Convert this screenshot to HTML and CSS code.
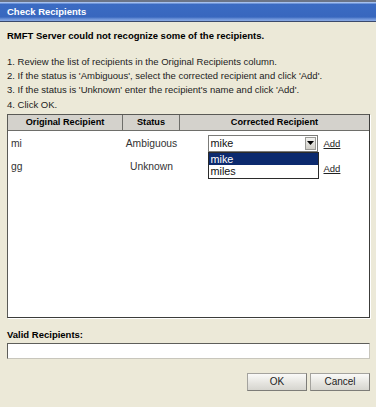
FILE: index.html
```html
<!DOCTYPE html>
<html lang="en">
  <head>
    <meta charset="UTF-8" />
    <title>Check Recipients</title>
    <link rel="stylesheet" href="styles.css">
  </head>
  <body>
    <div class="titlebar"><span>Check Recipients</span></div>
    <div class="content">
      <p class="lead">RMFT Server could not recognize some of the recipients.</p>
      <div class="steps">
        <div>1. Review the list of recipients in the Original Recipients column.</div>
        <div>2. If the status is 'Ambiguous', select the corrected recipient and click 'Add'.</div>
        <div>3. If the status is 'Unknown' enter the recipient's name and click 'Add'.</div>
        <div>4. Click OK.</div>
      </div>

      <div class="grid">
        <div class="grid-head">
          <div class="cell">Original Recipient</div>
          <div class="cell">Status</div>
          <div class="cell">Corrected Recipient</div>
        </div>
        <div class="grid-body">
          <div class="row">
            <div class="orig">mi</div>
            <div class="status">Ambiguous</div>
            <div class="fix">
              <div class="select">
                <span>mike</span>
                <span class="arrow"><svg width="7" height="4" viewBox="0 0 7 4"><path d="M0 0h7L3.5 4z" fill="#000"/></svg></span>
                <ul class="dropdown">
                  <li class="active">mike</li>
                  <li>miles</li>
                </ul>
              </div>
              <a class="add" href="#">Add</a>
            </div>
          </div>
          <div class="row">
            <div class="orig">gg</div>
            <div class="status">Unknown</div>
            <div class="fix">
              <div class="textbox"></div>
              <a class="add" href="#">Add</a>
            </div>
          </div>
        </div>
      </div>

      <div class="valid-label">Valid Recipients:</div>
      <div class="valid-input"></div>

      <div class="actions">
        <button>OK</button>
        <button>Cancel</button>
      </div>
    </div>
  </body>
</html>
```

FILE: styles.css
```css
* {
  margin: 0;
  padding: 0;
  box-sizing: border-box;
}
body {
  font-family: "Liberation Sans", Arial, sans-serif;
  font-size: 9.5px;
  background-color: #ece9d8;
  color: #000;
  width: 376px;
  height: 407px;
  overflow: hidden;
}
.titlebar {
  height: 22px;
  border-top: 2px solid #6b7487;
  border-bottom: 1px solid #3b4a6c;
  background: linear-gradient(#a4c0f0 0, #a4c0f0 1px, #3b6bc3 2px, #3867be 15px, #6b92d8 17px, #8aaae4 19px);
  color: #fff;
  font-weight: bold;
  padding-left: 7px;
  line-height: 19px;
}
.content {
  padding: 0 6px 0 7px;
}
.lead {
  font-weight: bold;
  line-height: 12px;
  margin-top: 8px;
}
.steps {
  margin-top: 13px;
  line-height: 14.2px;
  color: #222;
}
.grid {
  margin-top: 2px;
  height: 204px;
  border: 1px solid #5a5a56;
  border-right-color: #3c3c3a;
  border-bottom-color: #3c3c3a;
  box-shadow: 1px 1px 0 #fff;
  background: #fff;
  display: flex;
  flex-direction: column;
}
.grid-head,
.row {
  display: grid;
  grid-template-columns: 115px 57px 1fr;
}
.grid-head {
  height: 16px;
  background: #d4d2cc;
  border-bottom: 1px solid #6e6e6a;
  font-weight: bold;
  font-size: 9.2px;
}
.grid-head .cell {
  text-align: center;
  line-height: 15px;
  border-right: 1px solid #6e6e6a;
}
.grid-head .cell:last-child {
  border-right: none;
}
.grid-body {
  padding-top: 1px;
  font-size: 10.3px;
  color: #333;
}
.row {
  height: 23px;
  align-items: center;
}
.orig {
  padding-left: 3px;
}
.status {
  text-align: center;
}
.fix {
  display: flex;
  align-items: center;
  justify-content: center;
  gap: 6px;
}
.select,
.textbox {
  position: relative;
  width: 110px;
  height: 17px;
  border: 1px solid #7b7b78;
  background: #fff;
}
.textbox {
  margin-top: 4px;
}
.select {
  display: flex;
  align-items: center;
  padding-left: 2px;
  font-size: 10.8px;
  color: #111;
}
.arrow {
  position: absolute;
  right: 1px;
  top: 1px;
  width: 11px;
  height: 13px;
  background: linear-gradient(#f2f2f0, #cfcdc6);
  border: 1px solid #9a9a96;
  display: flex;
  align-items: center;
  justify-content: center;
}
.dropdown {
  position: absolute;
  left: -1px;
  top: 16px;
  width: 111px;
  list-style: none;
  border: 1px solid #2b2b2b;
  background: #fff;
  z-index: 5;
}
.dropdown li {
  height: 12.5px;
  line-height: 12.5px;
  padding-left: 2px;
}
.dropdown li.active {
  background: #0c2a6e;
  color: #fff;
}
.add {
  color: #222;
  font-size: 9.5px;
  text-decoration: underline;
  width: 18px;
}
.row:last-child .add {
  margin-top: 4px;
}
.valid-label {
  margin-top: 11px;
  font-weight: bold;
  line-height: 12px;
}
.valid-input {
  margin-top: 2px;
  height: 16px;
  background: #fff;
  border: 1px solid #c8c6bc;
  border-top-color: #5e5e5a;
  border-left-color: #5e5e5a;
}
.actions {
  margin-top: 14px;
  display: flex;
  justify-content: flex-end;
  gap: 3px;
}
.actions button {
  width: 60px;
  height: 18px;
  font-family: "Liberation Sans", Arial, sans-serif;
  font-size: 10px;
  color: #222;
  background: linear-gradient(#fafaf8, #e4e3de 60%, #d6d5cf);
  border: 1px solid #a4a39e;
  border-right-color: #7d7c78;
  border-bottom-color: #7d7c78;
}
```
